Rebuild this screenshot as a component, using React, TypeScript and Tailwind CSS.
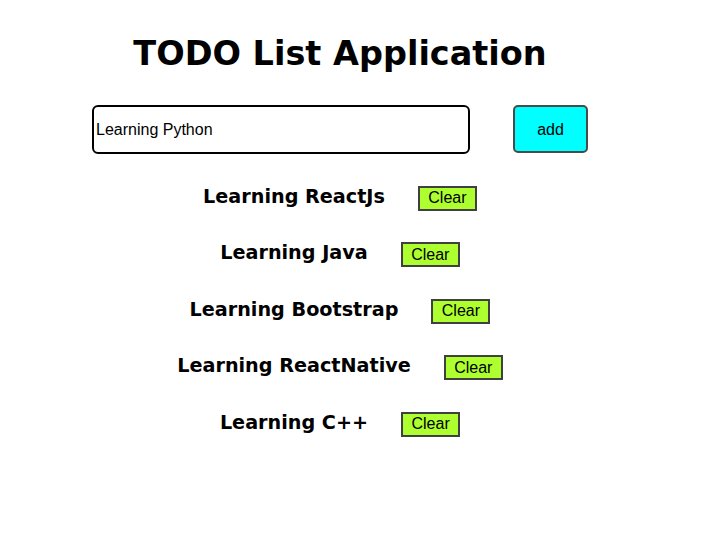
import { useState } from "react";

const initialItems = [
  "Learning ReactJs",
  "Learning Java",
  "Learning Bootstrap",
  "Learning ReactNative",
  "Learning C++",
];

export default function App() {
  const [items, setItems] = useState<string[]>(initialItems);
  const [text, setText] = useState("Learning Python");

  const addItem = () => {
    if (!text.trim()) return;
    setItems([...items, text]);
    setText("");
  };

  const removeItem = (idx: number) => {
    setItems(items.filter((_, i) => i !== idx));
  };

  return (
    <div className="w-[680px] bg-white text-black pt-[34px] flex flex-col items-center">
      <h1 className="font-['DejaVu_Sans',sans-serif] font-bold text-[33.5px] leading-[40px] whitespace-nowrap">
        TODO List Application
      </h1>
      <div className="flex items-start gap-[43px] mt-[31px]">
        <input
          value={text}
          onChange={(e) => setText(e.target.value)}
          className="w-[378px] h-[49px] border-2 border-black rounded-[6px] pl-[2px] pt-[1px] text-[16px] font-['Liberation_Sans',sans-serif] outline-none"
        />
        <button
          onClick={addItem}
          className="w-[75px] h-[48px] bg-[#00ffff] border-2 border-[#4a4a4a] rounded-[5px] pt-[1px] text-[16px] font-['Liberation_Sans',sans-serif]"
        >
          add
        </button>
      </div>
      <ul className="mt-[16px] flex flex-col">
        {items.map((item, i) => (
          <li key={i} className="h-[56.5px] flex items-center justify-center gap-[33px]">
            <h3 className="font-['DejaVu_Sans',sans-serif] font-bold text-[19.2px] leading-[24px] mb-[3px] whitespace-nowrap">
              {item}
            </h3>
            <button
              onClick={() => removeItem(i)}
              className="w-[59px] h-[25px] bg-[#adff2f] border-2 border-[#404040] text-[16px] font-['Liberation_Sans',sans-serif] leading-none"
            >
              Clear
            </button>
          </li>
        ))}
      </ul>
    </div>
  );
}
